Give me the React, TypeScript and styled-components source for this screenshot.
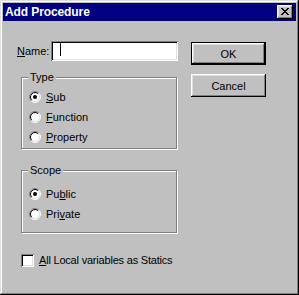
import React from 'react'
import styled, { createGlobalStyle } from 'styled-components'

const GlobalStyle = createGlobalStyle`
  html, body {
    margin: 0;
    padding: 0;
    background: #c0c0c0;
  }
  body {
    font-family: 'Liberation Sans', Arial, sans-serif;
    font-size: 11px;
    color: #000;
  }
`

const WindowStyled = styled.div`
  width: 299px;
  height: 295px;
  box-sizing: border-box;
  padding: 3px;
  background: #c0c0c0;
  box-shadow: inset -1px -1px #000, inset 1px 1px #dfdfdf,
    inset -2px -2px #808080, inset 2px 2px #fff;
  display: flex;
  flex-direction: column;
`

const TitleBar = styled.div`
  height: 18px;
  background: #000080;
  display: flex;
  align-items: center;
  justify-content: space-between;
  padding: 0 3px 0 2px;
  flex-shrink: 0;
`

const TitleText = styled.span`
  color: #fff;
  font-weight: 700;
  font-size: 12px;
  line-height: 18px;
  letter-spacing: -0.1px;
`

const CloseButton = styled.div`
  width: 16px;
  height: 14px;
  box-sizing: border-box;
  background: #c0c0c0;
  box-shadow: inset -1px -1px #000, inset 1px 1px #fff,
    inset -2px -2px #808080, inset 2px 2px #dfdfdf;
  display: flex;
  align-items: center;
  justify-content: center;
  padding: 0 1px 1px 0;
`

const Body = styled.div`
  display: flex;
  gap: 13px;
  padding: 20px 0 0 14px;
`

const LeftColumn = styled.div`
  width: 161px;
  flex-shrink: 0;
  display: flex;
  flex-direction: column;
`

const NameRow = styled.div`
  display: flex;
  align-items: center;
  height: 20px;
`

const NameLabel = styled.label`
  width: 34px;
  line-height: 13px;
`

const TextBox = styled.div`
  width: 127px;
  height: 20px;
  box-sizing: border-box;
  background: #fff;
  box-shadow: inset 1px 1px #808080, inset -1px -1px #fff,
    inset 2px 2px #000, inset -2px -2px #dfdfdf;
  padding: 2px 0 0 9px;
`

const Caret = styled.div`
  width: 1px;
  height: 13px;
  background: #000;
`

const GroupBox = styled.div<{ $top: number; $bottom: number; $gap: number }>`
  position: relative;
  margin: ${(p) => p.$gap}px 0 0 4px;
  width: 156px;
  box-sizing: border-box;
  border: 1px solid #808080;
  box-shadow: inset 1px 1px #fff, 1px 1px #fff;
  padding: ${(p) => p.$top}px 0 ${(p) => p.$bottom}px 7px;
`

const Legend = styled.span`
  position: absolute;
  top: -7px;
  left: 6px;
  padding: 0 2px;
  background: #c0c0c0;
  line-height: 13px;
`

const OptionRow = styled.div`
  display: flex;
  align-items: center;
  gap: 5px;
  height: 20px;
  line-height: 13px;
`

const CheckRow = styled.div`
  display: flex;
  align-items: center;
  gap: 5px;
  margin: 21px 0 0 4px;
  height: 13px;
  line-height: 13px;
  white-space: nowrap;
`

const CheckLabel = styled.span`
  letter-spacing: -0.2px;
`

const CheckBox = styled.div`
  width: 13px;
  height: 13px;
  flex-shrink: 0;
  box-sizing: border-box;
  background: #fff;
  box-shadow: inset 1px 1px #808080, inset -1px -1px #fff,
    inset 2px 2px #000, inset -2px -2px #dfdfdf;
`

const RightColumn = styled.div`
  width: 75px;
  display: flex;
  flex-direction: column;
  gap: 9px;
  padding-top: 1px;
`

const Button = styled.button<{ $default?: boolean }>`
  width: 75px;
  height: 23px;
  box-sizing: border-box;
  margin: 0;
  padding: 0;
  border: ${(p) => (p.$default ? '1px solid #000' : 'none')};
  background: #c0c0c0;
  font-family: 'Liberation Sans', Arial, sans-serif;
  font-size: 11px;
  color: #000;
  box-shadow: inset -1px -1px #000, inset 1px 1px #fff,
    inset -2px -2px #808080, inset 2px 2px #dfdfdf;
`

const arc = (r: number, first: boolean) => {
  const d = r * 0.7071
  return first
    ? `M ${6 - d} ${6 + d} A ${r} ${r} 0 0 1 ${6 + d} ${6 - d}`
    : `M ${6 + d} ${6 - d} A ${r} ${r} 0 0 1 ${6 - d} ${6 + d}`
}

const Radio = ({ checked }: { checked?: boolean }) => (
  <svg width='12' height='12' viewBox='0 0 12 12'>
    <circle cx='6' cy='6' r='5' fill='#fff' />
    <path d={arc(5.5, true)} stroke='#808080' strokeWidth='1' fill='none' />
    <path d={arc(5.5, false)} stroke='#fff' strokeWidth='1' fill='none' />
    <path d={arc(4.5, true)} stroke='#000' strokeWidth='1' fill='none' />
    <path d={arc(4.5, false)} stroke='#dfdfdf' strokeWidth='1' fill='none' />
    {checked && <circle cx='6' cy='6' r='2' fill='#000' />}
  </svg>
)

const CloseGlyph = () => (
  <svg width='8' height='7' viewBox='0 0 8 7' shapeRendering='crispEdges'>
    <path
      d='M0 0h2v1h-2z M6 0h2v1h-2z M1 1h2v1h-2z M5 1h2v1h-2z M2 2h4v1h-4z M3 3h2v1h-2z M2 4h4v1h-4z M1 5h2v1h-2z M5 5h2v1h-2z M0 6h2v1h-2z M6 6h2v1h-2z'
      fill='#000'
    />
  </svg>
)

export default function App() {
  return (
    <>
      <GlobalStyle />
      <WindowStyled>
        <TitleBar>
          <TitleText>Add Procedure</TitleText>
          <CloseButton>
            <CloseGlyph />
          </CloseButton>
        </TitleBar>
        <Body>
          <LeftColumn>
            <NameRow>
              <NameLabel>
                <u>N</u>ame:
              </NameLabel>
              <TextBox>
                <Caret />
              </TextBox>
            </NameRow>

            <GroupBox $gap={16} $top={9} $bottom={1}>
              <Legend>Type</Legend>
              <OptionRow>
                <Radio checked />
                <span>
                  <u>S</u>ub
                </span>
              </OptionRow>
              <OptionRow>
                <Radio />
                <span>
                  <u>F</u>unction
                </span>
              </OptionRow>
              <OptionRow>
                <Radio />
                <span>
                  <u>P</u>roperty
                </span>
              </OptionRow>
            </GroupBox>

            <GroupBox $gap={21} $top={13} $bottom={8}>
              <Legend>Scope</Legend>
              <OptionRow>
                <Radio checked />
                <span>
                  Pu<u>b</u>lic
                </span>
              </OptionRow>
              <OptionRow>
                <Radio />
                <span>
                  Pri<u>v</u>ate
                </span>
              </OptionRow>
            </GroupBox>

            <CheckRow>
              <CheckBox />
              <CheckLabel>
                <u>A</u>ll Local variables as Statics
              </CheckLabel>
            </CheckRow>
          </LeftColumn>

          <RightColumn>
            <Button $default>OK</Button>
            <Button>Cancel</Button>
          </RightColumn>
        </Body>
      </WindowStyled>
    </>
  )
}
